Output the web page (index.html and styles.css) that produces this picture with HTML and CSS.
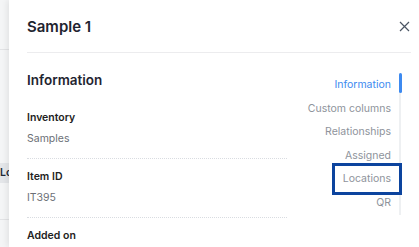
FILE: index.html
```html
<!DOCTYPE html>
<html lang="en">
<head>
    <meta charset="UTF-8">
    <meta name="viewport" content="width=device-width, initial-scale=1.0">
    <title>Sample 1</title>
    <link rel="stylesheet" href="styles.css">
</head>
<body>
    <div class="screen">
        <!-- page behind the drawer, mostly hidden -->
        <div class="page-strip">
            <div class="strip-head"></div>
            <div class="strip-gap"></div>
            <div class="strip-row">Lo</div>
            <div class="strip-gap2"></div>
        </div>

        <aside class="drawer">
            <header class="drawer-header">
                <h1>Sample 1</h1>
                <button class="close-btn" aria-label="Close">
                    <svg width="11" height="11" viewBox="0 0 11 11">
                        <path d="M1 1 L10 10 M10 1 L1 10" stroke="#4b5563" stroke-width="1.2" fill="none"/>
                    </svg>
                </button>
            </header>

            <div class="drawer-body">
                <section class="details">
                    <h2>Information</h2>
                    <div class="field">
                        <div class="field-label">Inventory</div>
                        <div class="field-value">Samples</div>
                    </div>
                    <div class="field">
                        <div class="field-label">Item ID</div>
                        <div class="field-value">IT395</div>
                    </div>
                    <div class="field">
                        <div class="field-label">Added on</div>
                    </div>
                </section>

                <nav class="side-nav">
                    <ul>
                        <li class="active"><span>Information</span></li>
                        <li><span>Custom columns</span></li>
                        <li><span>Relationships</span></li>
                        <li><span>Assigned</span></li>
                        <li class="highlight"><span>Locations</span></li>
                        <li><span>QR</span></li>
                    </ul>
                </nav>
            </div>
        </aside>
    </div>
</body>
</html>
```

FILE: styles.css
```css
* {
    margin: 0;
    padding: 0;
    box-sizing: border-box;
    font-family: 'Inter', 'Liberation Sans', sans-serif;
}

body {
    background-color: #f4f5f6;
    color: #1f2937;
    overflow: hidden;
}

.screen {
    display: flex;
    width: 419px;
    height: 247px;
    overflow: hidden;
}

/* Page behind the drawer */
.page-strip {
    flex: 0 0 9px;
    overflow: hidden;
    background-color: #f4f5f6;
}

.strip-head {
    height: 50px;
    border-bottom: 1px solid #e2e3e5;
}

.strip-gap {
    height: 113px;
}

.strip-row {
    height: 20px;
    line-height: 20px;
    background-color: #e4e6e9;
    font-size: 10.5px;
    font-weight: 600;
    color: #1f2937;
    white-space: nowrap;
}

.strip-gap2 {
    height: 37px;
    border-bottom: 1px solid #e2e3e5;
}

/* Drawer */
.drawer {
    flex: 1;
    background-color: #fff;
    box-shadow: -2px 0 6px rgba(0, 0, 0, 0.08);
}

.drawer-header {
    height: 53px;
    margin: 0 8px 0 18px;
    border-bottom: 1px solid #ececee;
    display: flex;
    align-items: center;
    justify-content: space-between;
}

.drawer-header h1 {
    font-size: 15px;
    font-weight: 600;
    color: #1f2430;
}

.close-btn {
    background: none;
    border: none;
    width: 11px;
    height: 11px;
    margin-right: 1px;
    display: flex;
}

.drawer-body {
    display: flex;
    justify-content: space-between;
    padding: 17px 18px 0 18px;
}

.details {
    flex: 0 0 260px;
}

.details h2 {
    font-size: 13.5px;
    font-weight: 600;
    line-height: 20px;
    margin-bottom: 10px;
    color: #1f2430;
}

.field {
    padding: 9px 0 10px;
    border-bottom: 1px dotted #d9dce1;
}

.field-label {
    font-size: 10.5px;
    font-weight: 600;
    line-height: 18px;
    color: #222;
}

.field-value {
    font-size: 10.5px;
    line-height: 18px;
    margin-top: 3px;
    color: #6b6f76;
}

/* Section nav */
.side-nav ul {
    list-style: none;
    margin-top: 3px;
    border-right: 2px solid #eef0f2;
}

.side-nav li {
    position: relative;
    height: 23.6px;
    line-height: 24px;
    padding-right: 8px;
    text-align: right;
    font-size: 10.5px;
    color: #8e939b;
}

.side-nav li.active {
    color: #3d8af0;
}

.side-nav li.active::after {
    content: "";
    position: absolute;
    right: -2.5px;
    top: 0;
    width: 3px;
    height: 20px;
    border-radius: 2px;
    background-color: #3d8af0;
}

.side-nav li span {
    position: relative;
    display: inline-block;
    line-height: 14px;
}

/* annotation box drawn over the Locations link */
.side-nav li.highlight span::after {
    content: "";
    position: absolute;
    top: -9px;
    bottom: -9px;
    left: -11px;
    right: -11px;
    border: 3px solid #0c449e;
}
```
